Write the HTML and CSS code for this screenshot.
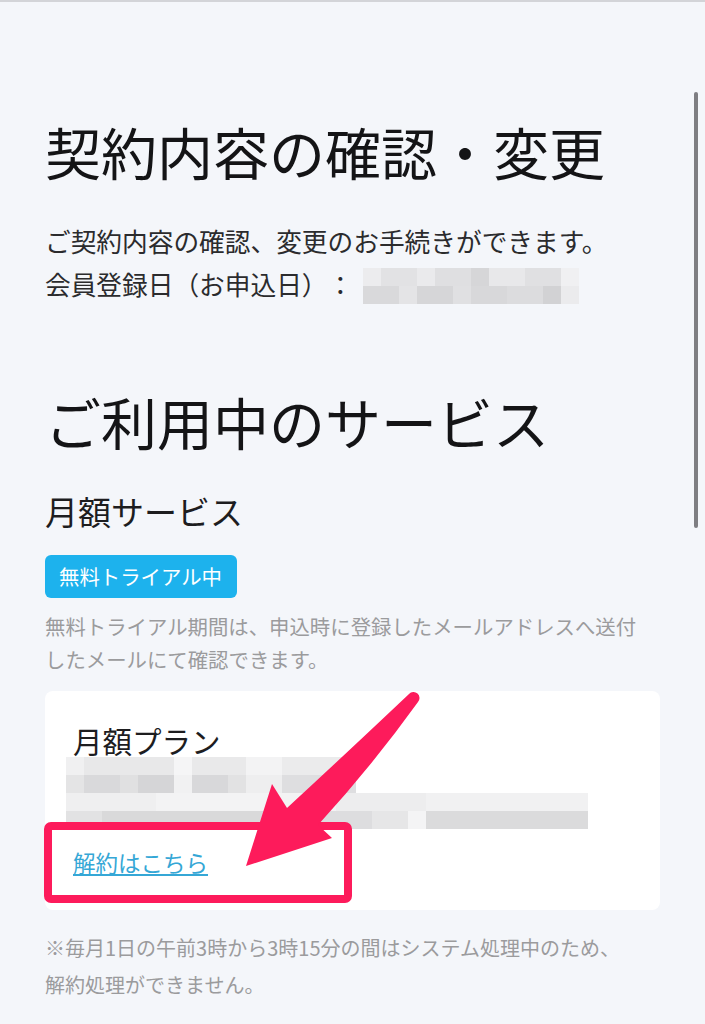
FILE: index.html
```html
<!doctype html>
<html lang="ja">
<head>
    <meta charset="UTF-8">
    <meta name="viewport" content="width=device-width, initial-scale=1.0">
    <title>契約内容の確認・変更</title>
    <link rel="stylesheet" href="styles.css">
</head>
<body>
<div class="page">
    <h1 class="title">契約内容の確認・変更</h1>
    <p class="lead">ご契約内容の確認、変更のお手続きができます。<br>会員登録日（お申込日）：<span class="date"><i class="d1"></i><i class="d2"></i></span></p>

    <h2 class="title services">ご利用中のサービス</h2>
    <h3 class="sub">月額サービス</h3>
    <span class="badge">無料トライアル中</span>
    <p class="hint">無料トライアル期間は、申込時に登録したメールアドレスへ送付<br>したメールにて確認できます。</p>

    <div class="card">
        <h4 class="plan">月額プラン</h4>
        <!-- ぼかし部分 -->
        <div class="blur">
            <i class="r1"></i>
            <i class="r2"></i>
            <i class="r3"></i>
            <i class="r4"></i>
        </div>
        <a class="cancel" href="#">解約はこちら</a>

        <div class="mark"></div>
        <svg class="arrow" width="400" height="220" viewBox="45 691 400 220">
            <path d="M409 694 Q352 748 287 808 L272 784 L246 866 L332 838 L318 825 Q372 766 418 702 A5 5 0 0 0 409 694 Z" fill="#fd1b5b"/>
        </svg>
    </div>

    <p class="note">※毎月1日の午前3時から3時15分の間はシステム処理中のため、<br>解約処理ができません。</p>
</div>
<div class="scrollbar"></div>
</body>
</html>
```

FILE: styles.css
```css
body{
    margin:0;
    background-color:#f4f6fa;
    border-top:2px solid #d3d4d8;
    font-family:"Noto Sans CJK JP", sans-serif;
    color:#1d1d1f;
    text-spacing-trim:space-all;
}

.page{
    padding:115px 45px 40px;
}

.title{
    margin:0;
    font-size:56px;
    line-height:68px;
    font-weight:400;
    color:#141416;
}
.services{
    margin-top:82px;
}

.lead{
    margin:34px 0 0;
    font-size:25.7px;
    line-height:43px;
    color:#2b2b2d;
}
.date{
    display:inline-block;
    vertical-align:middle;
    margin:-4px 0 0 10px;
    width:216px;
}
.date i,.blur i{
    display:block;
    height:18px;
}
.date .d1{
    background:linear-gradient(90deg,#ececee 0 18px,#e2e2e4 18px 54px,#eaeaec 54px 72px,#dfdfe1 72px 108px,#d6d6d8 108px 126px,#e8e8ea 126px 162px,#e0e0e2 162px 198px,#f0f0f2 198px 216px);
}
.date .d2{
    background:linear-gradient(90deg,#d9d9db 0 36px,#e4e4e6 36px 54px,#d6d6d8 54px 90px,#e0e0e2 90px 108px,#d8d8da 108px 144px,#dcdcde 144px 180px,#d2d2d4 180px 198px,#ebebed 198px 216px);
}

.sub{
    margin:34px 0 0;
    font-size:33px;
    line-height:44px;
    font-weight:400;
}

.badge{
    display:block;
    width:fit-content;
    margin-top:22px;
    padding:7px 15px 7px 14px;
    font-size:20.4px;
    line-height:29px;
    color:#fff;
    background-color:#1db2ed;
    border-radius:6px;
}

.hint{
    margin:12px 0 0;
    font-size:20.4px;
    line-height:33px;
    color:#9b9b9d;
}

.card{
    position:relative;
    margin-top:15px;
    padding:29px 28px 32px;
    background-color:#fff;
    border-radius:8px;
}
.plan{
    margin:0;
    font-size:29.5px;
    line-height:40px;
    font-weight:400;
}

.blur{
    margin:-3px 0 0 -7px;
}
.blur .r1{
    width:290px;
    background:linear-gradient(90deg,#f0f0f1 0 18px,#e8e8e9 18px 108px,#f5f5f6 108px 126px,#e9e9ea 126px 180px,#f3f3f4 180px 216px,#ebebec 216px 290px);
}
.blur .r2{
    width:290px;
    background:linear-gradient(90deg,#e4e4e5 0 18px,#d9d9db 18px 54px,#e0e0e1 54px 72px,#d5d5d7 72px 108px,#f1f1f2 108px 126px,#d8d8da 126px 162px,#e2e2e3 162px 180px,#eeeeef 180px 216px,#dedee0 216px 290px);
}
.blur .r3{
    width:522px;
    background:linear-gradient(90deg,#efeff0 0 90px,#f3f3f4 90px 270px,#ededee 270px 360px,#f1f1f2 360px 522px);
}
.blur .r4{
    width:522px;
    background:linear-gradient(90deg,#e2e2e3 0 36px,#d9d9da 36px 198px,#ececed 198px 216px,#dddddf 216px 306px,#e6e6e7 306px 342px,#f4f4f5 342px 360px,#dbdbdc 360px 522px);
}

.cancel{
    display:block;
    width:fit-content;
    margin-top:17px;
    font-size:22.5px;
    line-height:32px;
    color:#35a7d6;
    text-decoration:underline;
}

/* 注釈の枠と矢印 */
.mark{
    position:absolute;
    left:-1px;
    top:131px;
    width:292px;
    height:65px;
    border:8px solid #fd1b5b;
    border-radius:7px;
}
.arrow{
    position:absolute;
    left:0;
    top:0;
    overflow:visible;
}

.note{
    margin:19px 0 0;
    font-size:20px;
    line-height:37px;
    color:#9b9b9d;
}

.scrollbar{
    position:fixed;
    top:92px;
    right:7px;
    width:4px;
    height:436px;
    border-radius:2px;
    background-color:#7e7e82;
}
```
